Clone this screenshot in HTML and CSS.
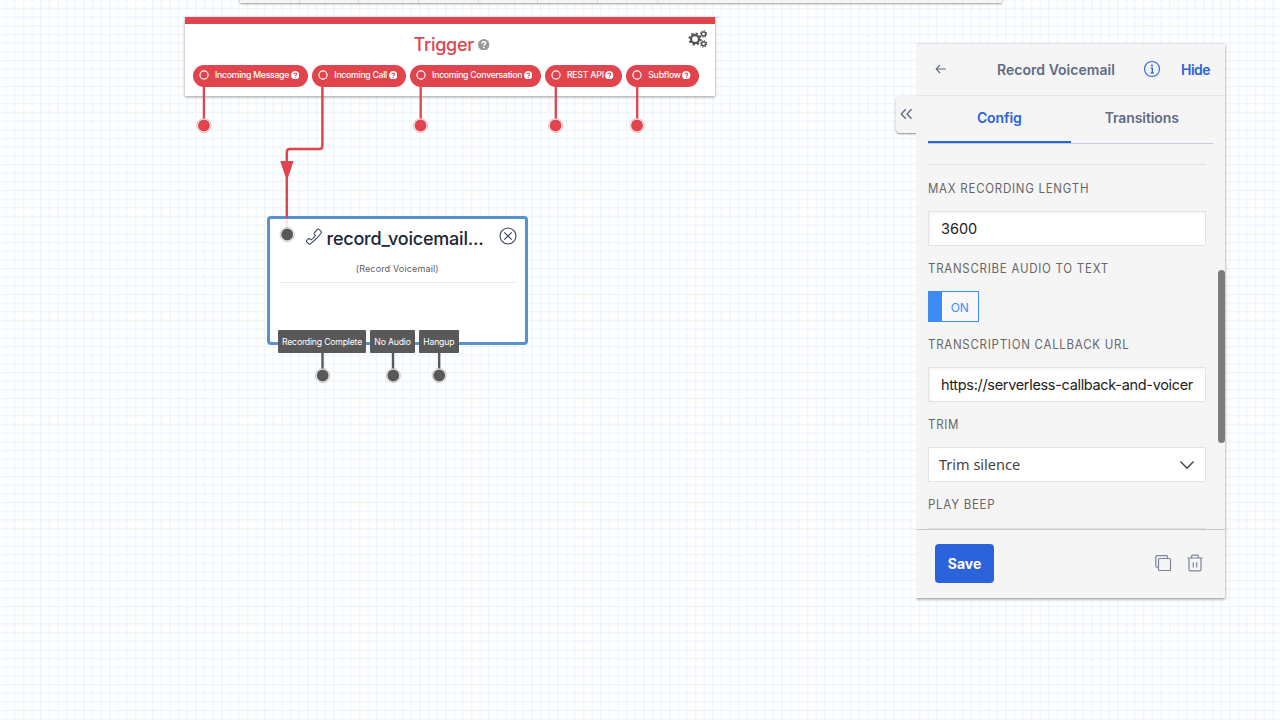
FILE: index.html
```html
<!DOCTYPE html>
<html lang="en">
<head>
<meta charset="utf-8">
<title>Studio flow</title>
<link rel="stylesheet" href="styles.css">
</head>
<body>
<svg class="symbols" width="0" height="0">
  <symbol id="help" viewBox="0 0 12 12"><circle cx="6" cy="6" r="6" fill="currentColor"/><path d="M4.1 4.7C4.1 3.4 5 2.8 6 2.8s2 .6 2 1.7c0 1.2-1.9 1.3-1.9 2.5" fill="none" stroke="var(--mark)" stroke-width="1.5"/><rect x="5.2" y="8" width="1.6" height="1.5" fill="var(--mark)"/></symbol>
  <symbol id="ring" viewBox="0 0 10 10"><circle cx="5" cy="5" r="4.1" fill="none" stroke="#fff" stroke-width="1.15"/></symbol>
</svg>
<main class="canvas">
  <svg class="grid" width="1280" height="720">
    <defs><pattern id="cell" x="5.6" y="7.9" width="8.617" height="8.667" patternUnits="userSpaceOnUse"><path d="M.7 0V8.667M0 .6H8.617" stroke="#ebf4fc" stroke-width="1.1"/></pattern></defs>
    <rect width="1280" height="720" fill="url(#cell)"/>
  </svg>

  <div class="upper"><i></i><i></i><i></i><i></i><i></i><i></i><i></i></div>

  <section class="trigger">
    <header class="trigger-head">
      <h1>Trigger</h1><svg class="help-title"><use href="#help"/></svg>
      <svg class="gears" viewBox="0 0 20 18" fill="none" stroke="#555">
        <circle cx="7" cy="9" r="4" stroke-width="2.3"/><circle cx="7" cy="9" r="5.7" stroke-width="1.8" stroke-dasharray="2.2 2.277"/>
        <circle cx="15.6" cy="4" r="2" stroke-width="1.4"/><circle cx="15.6" cy="4" r="3.1" stroke-width="1.1" stroke-dasharray="1.2 1.235"/>
        <circle cx="15.6" cy="13.8" r="2" stroke-width="1.4"/><circle cx="15.6" cy="13.8" r="3.1" stroke-width="1.1" stroke-dasharray="1.2 1.235"/>
      </svg>
    </header>
    <div class="pills">
      <div class="pill p1"><svg class="ring"><use href="#ring"/></svg><span>Incoming Message</span><svg class="q"><use href="#help"/></svg></div>
      <div class="pill p2"><svg class="ring"><use href="#ring"/></svg><span>Incoming Call</span><svg class="q"><use href="#help"/></svg></div>
      <div class="pill p3"><svg class="ring"><use href="#ring"/></svg><span>Incoming Conversation</span><svg class="q"><use href="#help"/></svg></div>
      <div class="pill p4"><svg class="ring"><use href="#ring"/></svg><span>REST API</span><svg class="q"><use href="#help"/></svg></div>
      <div class="pill p5"><svg class="ring"><use href="#ring"/></svg><span>Subflow</span><svg class="q"><use href="#help"/></svg></div>
    </div>
  </section>

  <section class="node">
    <header class="node-head">
      <svg class="phone" viewBox="0 0 18 18" fill="none" stroke="#394762" stroke-width="1.1" stroke-linejoin="round"><path d="M12.4 1.3c.5-.5 1-.5 1.5 0l2.2 2c.5.5.5.9.1 1.5-1 1.600-2 2.900-3.400 4.300-2.300 2.400-4.600 4.600-7.400 6.800-.6.500-1.100.500-1.600 0l-2.100-2.100c-.5-.5-.5-1 0-1.500l1.700-1.500c.5-.4 1-.4 1.500 0l1.200 1.100c1.700-1.200 3.200-2.700 4.400-4.400L9.400 6.300c-.4-.5-.4-1 0-1.500z"/></svg>
      <h2>record_voicemail...</h2>
      <svg class="close" viewBox="0 0 18 18" fill="none" stroke="#33415c" stroke-width="1.1"><circle cx="9" cy="9" r="8"/><path d="M5.3 5.300l7.400 7.400M12.700 5.300l-7.400 7.400"/></svg>
    </header>
    <p class="node-type">(Record Voicemail)</p>
    <hr>
  </section>
  <div class="outs"><span class="o1">Recording Complete</span><span class="o2">No Audio</span><span class="o3">Hangup</span></div>

  <svg class="wires" width="1280" height="720">
    <defs><linearGradient id="fade" gradientUnits="userSpaceOnUse" x1="0" y1="217" x2="0" y2="227"><stop offset="0" stop-color="#e1444d"/><stop offset=".15" stop-color="#e1444d" stop-opacity=".18"/><stop offset="1" stop-color="#e1444d" stop-opacity=".12"/></linearGradient></defs>
    <g fill="none" stroke="#e1444d" stroke-width="2.3">
      <path d="M203.900 86V119M420.700 86V119M555.800 86V119M637.200 86V119"/>
      <path d="M322.400 86V146q0 3-3 3H290q-3.200 0-3.200 3.200V217" stroke-width="2.500"/>
    </g>
    <rect x="285.600" y="217" width="2.400" height="11" fill="url(#fade)"/>
    <path d="M280.200 161h13.400l-5.200 15.500q-1.500 2-3 0z" fill="#e1444d"/>
    <g fill="#e1444d"><circle cx="203.900" cy="125.500" r="5.900"/><circle cx="420.500" cy="125.500" r="5.900"/><circle cx="555.600" cy="125.500" r="5.900"/><circle cx="637" cy="125.500" r="5.900"/></g>
    <g fill="none" stroke="#f1b3b7" stroke-width=".9"><circle cx="203.900" cy="125.500" r="7.100"/><circle cx="420.500" cy="125.500" r="7.100"/><circle cx="555.600" cy="125.500" r="7.100"/><circle cx="637" cy="125.500" r="7.100"/></g>
    <path d="M322.500 353V369M393 353V369M439.200 353V369" stroke="#595959" stroke-width="2.400"/>
    <g fill="#595959"><circle cx="287.200" cy="234.500" r="5.900"/><circle cx="322.700" cy="375.500" r="5.900"/><circle cx="393.300" cy="375.500" r="5.900"/><circle cx="439.200" cy="375.500" r="5.900"/></g>
    <g fill="none" stroke="#bdbdbd" stroke-width=".9"><circle cx="287.200" cy="234.500" r="7.100"/><circle cx="322.700" cy="375.500" r="7.100"/><circle cx="393.300" cy="375.500" r="7.100"/><circle cx="439.200" cy="375.500" r="7.100"/></g>
  </svg>

  <button class="collapse" aria-label="Collapse"><svg viewBox="0 0 14 12" fill="none" stroke="#606b85" stroke-width="1.500"><path d="M6.200 .9L1.400 6l4.800 5.100M12.400 .9L7.600 6l4.800 5.100"/></svg></button>
  <aside class="panel">
    <header class="panel-head">
      <svg class="back" viewBox="0 0 12 10" fill="none" stroke="#606b85" stroke-width="1.100"><path d="M11 5H1.200M5 1L1.200 5 5 9"/></svg>
      <h3>Record Voicemail</h3>
      <svg class="info" viewBox="0 0 18 18"><circle cx="9" cy="9" r="7.500" fill="none" stroke="#2b63db" stroke-width="1.100"/><path d="M7.800 8.100h1.500v4.600M7.500 12.800h3.400" fill="none" stroke="#2b63db" stroke-width="1.300"/><circle cx="9" cy="5.600" r="1" fill="#2b63db"/></svg>
      <a class="hide">Hide</a>
    </header>
    <nav class="tabs"><a class="tab active">Config</a><a class="tab">Transitions</a></nav>
    <div class="body">
      <div class="field"><label><span>Max recording length</span></label><div class="input"><span>3600</span></div></div>
      <div class="field toggle-field"><label><span>Transcribe audio to text</span></label><div class="toggle"><b></b><span>ON</span></div></div>
      <div class="field"><label><span>Transcription callback URL</span></label><div class="input url"><span>https://serverless-callback-and-voicer</span></div></div>
      <div class="field"><label><span>Trim</span></label><div class="input select"><span>Trim silence</span><svg viewBox="0 0 16 10" fill="none" stroke="#444" stroke-width="1.400"><path d="M1.500 1.500L8 8.300l6.500-6.800"/></svg></div></div>
      <div class="field last"><label><span>Play beep</span></label></div>
      <div class="thumb"></div>
    </div>
    <footer class="panel-foot">
      <button class="save">Save</button>
      <svg class="tool" viewBox="0 0 18 18" fill="none" stroke="#7c859e" stroke-width="1.200"><rect x="4.500" y="4.500" width="12" height="12" rx="1"/><path d="M4.500 13.200H3q-1.200 0-1.200-1.200V2.900q0-1.200 1.200-1.200h9.300q1.200 0 1.200 1.200v1.600"/></svg>
      <svg class="tool" viewBox="0 0 18 18" fill="none" stroke="#7c859e" stroke-width="1.200"><path d="M1.500 4h15M5.600 4V2.500q0-1.300 1.300-1.300h4.200q1.300 0 1.300 1.300V4M3 4v11.500q0 1.300 1.300 1.300h9.400q1.300 0 1.300-1.300V4M7.300 8.200v5.200M10.700 8.200v5.200"/></svg>
    </footer>
  </aside>
</main>
</body>
</html>
```

FILE: styles.css
```css
* { box-sizing: border-box; }
body { margin: 0; font-family: Inter, "Liberation Sans", sans-serif; }
h1, h2, h3, p { margin: 0; }
button { border: 0; padding: 0; font: inherit; }
svg { display: block; flex: none; }
span { white-space: nowrap; }
.symbols { position: absolute; }
.canvas { position: relative; width: 1280px; height: 720px; overflow: hidden; background: #fff; }
.grid, .wires { position: absolute; left: 0; top: 0; }

.upper { position: absolute; left: 240px; top: -20px; width: 762px; height: 23px; display: flex; background: #f4f4f4; box-shadow: 0 1px 2px rgba(0,0,0,.4); }
.upper i { width: 59.7px; border-right: 1px solid #dcdcdc; }

.trigger { position: absolute; left: 184.5px; top: 17px; width: 530.5px; height: 79px; border-top: 7px solid #e1444d; background: rgba(255,255,255,.95); box-shadow: 0 1px 3px rgba(0,0,0,.4); }
.trigger-head { display: flex; align-items: center; height: 41px; padding-left: 229px; }
.trigger h1 { width: 60px; margin-top: -1px; font-size: 18px; font-weight: 500; color: #de4350; letter-spacing: -.25px; white-space: nowrap; }
.help-title { width: 11.5px; height: 11.5px; margin-left: 4.5px; color: #999; --mark: #fff; }
.gears { width: 20px; height: 18px; margin: -11px 0 0 198px; }
.pills { display: flex; gap: 4.3px; padding-left: 8.5px; }
.pill { display: flex; align-items: center; height: 22px; padding: 0 0 2px 6px; border-radius: 11px; background: #e1444d; color: #fff; font-size: 8.7px; font-weight: 500; }
.pill span { margin-top: -1px; letter-spacing: -.28px; }
.ring { width: 10px; height: 10px; margin-right: 6px; }
.q { width: 8.5px; height: 8.5px; margin-left: 1.5px; color: #fff; --mark: #e1444d; }
.p1 { width: 115px; } .p2 { width: 93.5px; } .p3 { width: 130.5px; } .p4 { width: 77px; } .p5 { width: 73px; }
.p4 span, .p5 span { letter-spacing: -.2px; }

.node { position: absolute; left: 266.5px; top: 215.5px; width: 261.5px; height: 129.5px; padding: 0 9px; border: 3px solid #5791cf; border-radius: 4px; background: rgba(255,255,255,.94); }
.node-head { display: flex; align-items: center; height: 40px; padding-left: 26.5px; }
.phone { width: 18px; height: 18px; margin: -4px 3.5px 0 0; }
.node h2 { width: 157px; margin-top: -1px; font-size: 18px; font-weight: 500; letter-spacing: -.23px; color: #1b2538; white-space: nowrap; }
.close { width: 18px; height: 18px; margin: -5px 0 0 16px; }
.node-type { height: 22px; font-size: 9px; line-height: 19px; letter-spacing: .15px; text-align: center; color: #606060; }
.node hr { position: relative; top: 1px; margin: 0; border: 0; border-top: 1px solid #ececec; }
.outs { position: absolute; left: 278px; top: 330px; display: flex; gap: 4px; }
.outs span { height: 23px; border-radius: 1px; background: #595959; color: #fff; font-size: 8.7px; line-height: 24px; letter-spacing: -.2px; text-align: center; }
.o1 { width: 88px; } .o2 { width: 45px; } .o3 { width: 39.5px; }

.collapse { position: absolute; left: 896px; top: 96px; width: 24px; height: 37px; padding: 0 0 2px 4px; border-radius: 4px 0 0 4px; background: #f5f5f5; box-shadow: 0 1px 2px rgba(0,0,0,.45); }
.collapse svg { width: 13px; height: 12px; }
.panel { position: absolute; left: 916px; top: 44px; width: 309px; height: 554px; display: flex; flex-direction: column; background: #f5f5f5; box-shadow: 0 1px 3px rgba(0,0,0,.45); clip-path: inset(-5px -5px -5px 0); }
.panel-head { display: flex; flex: none; align-items: center; height: 52px; padding: 0 0 1px 19px; border-bottom: 1px solid #e6e6e6; font-size: 14px; font-weight: 600; }
.back { width: 12px; height: 10px; }
.panel h3 { width: 119px; margin-left: 50px; font-size: 14px; font-weight: 600; letter-spacing: .03px; color: #606b85; white-space: nowrap; }
.info { width: 18px; height: 18px; margin-left: 27px; }
.hide { margin-left: 20px; color: #2b63db; letter-spacing: -.5px; }
.tabs { display: grid; flex: none; grid-template-columns: 1fr 1fr; height: 48px; margin: 0 12px; border-bottom: 1px solid #c8ccda; }
.tab { color: #606b85; font-size: 14px; font-weight: 600; line-height: 44px; letter-spacing: -.1px; text-align: center; }
.active { height: 47px; border-bottom: 2px solid #2b63db; color: #2b63db; }
.body { position: relative; flex: 1; min-height: 0; margin: 20px 0 0 12px; padding-top: 1px; }
.body::before, .body::after { content: ""; position: absolute; left: 0; width: 278px; height: 1px; background: #e0e0e0; }
.body::before { top: 0; } .body::after { bottom: 0; }
.field { width: 278px; height: 80px; }
.toggle-field { height: 76px; }
.last { height: 46px; }
label { display: flex; align-items: center; height: 46px; color: #666; font-size: 12.5px; text-transform: uppercase; letter-spacing: .8px; }
label span { transform: scaleX(.92); transform-origin: left; }
.input { display: flex; align-items: center; width: 278px; height: 35px; padding: 0 12px; border: 1px solid #e2e2e2; background: #fff; box-shadow: inset 2px 2px 3px rgba(0,0,0,.04); color: #222; font-size: 14.5px; }
.input span { flex: 1; }
.url { letter-spacing: -.32px; }
.toggle { display: flex; width: 50.5px; height: 31px; border: 1px solid #3e8bf8; color: #3e8bf8; font-size: 12px; line-height: 31px; background: #f8f8f8; }
.toggle b { width: 13px; background: #3e8bf8; }
.toggle span { flex: 1; text-align: center; }
.select { padding: 0 10px; font-family: "Noto Sans", sans-serif; font-size: 14.5px; color: #444; box-shadow: none; }
.select span { margin-top: -2px; }
.select svg { width: 16px; height: 10px; margin-right: .5px; }
.thumb { position: absolute; right: 0; top: 106px; width: 7px; height: 173px; border-radius: 4px; background: #7c7c7c; }
.panel-foot { display: flex; flex: none; align-items: center; height: 69px; padding: 0 21px 1px 19px; border-top: 1px solid #c9c9c9; }
.save { width: 59px; height: 39px; margin-right: auto; border-radius: 4px; background: #2b63db; color: #fff; font-size: 14px; font-weight: 700; }
.tool { width: 18px; height: 18px; margin: -2px 0 0 14px; }
```
